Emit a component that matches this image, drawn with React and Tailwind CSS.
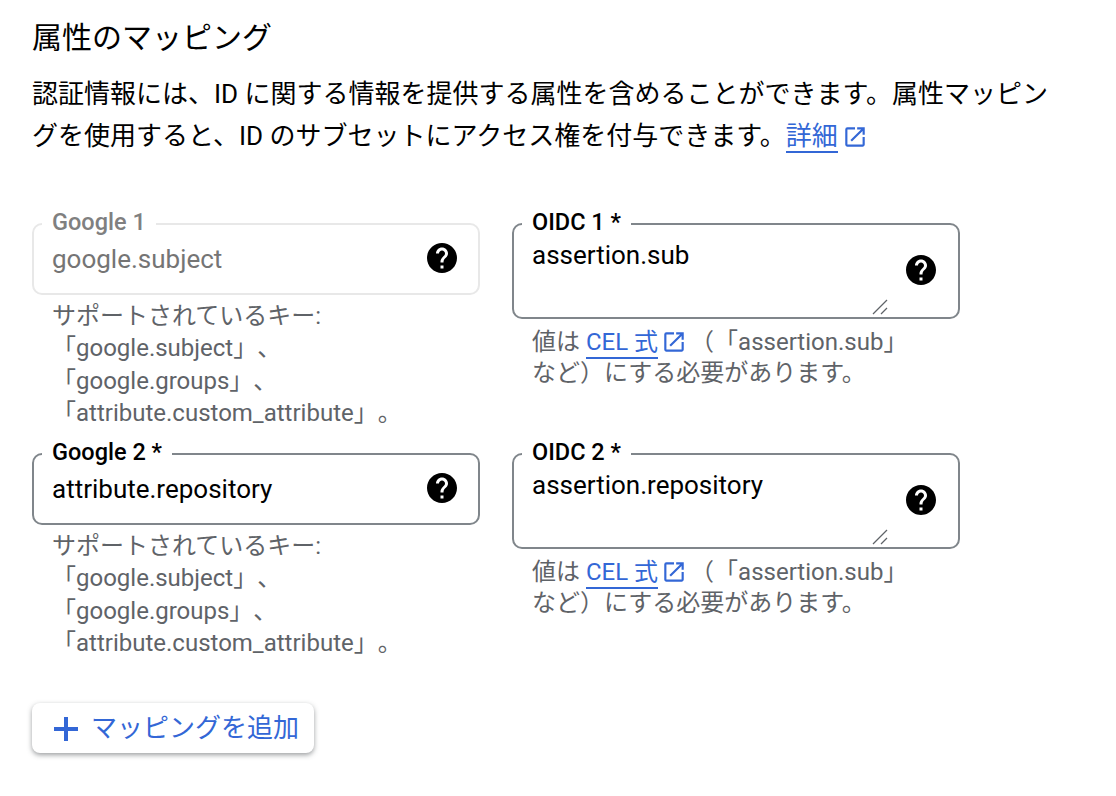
import React from 'react';

const helpPath = 'M12 2C6.48 2 2 6.48 2 12s4.48 10 10 10 10-4.48 10-10S17.52 2 12 2zm1 17h-2v-2h2v2zm2.07-7.75l-.9.92C13.45 12.9 13 13.5 13 15h-2v-.5c0-1.1.45-2.1 1.17-2.83l1.24-1.26c.37-.36.59-.86.59-1.41 0-1.1-.9-2-2-2s-2 .9-2 2H8c0-2.21 1.79-4 4-4s4 1.79 4 4c0 .88-.36 1.68-.93 2.25z';
const openPath = 'M19 19H5V5h7V3H5a2 2 0 00-2 2v14c0 1.1.9 2 2 2h14c1.1 0 2-.9 2-2v-7h-2v7zM14 3v2h3.59l-9.83 9.83 1.41 1.41L19 6.41V10h2V3h-7z';

const HelpIcon = () => (
    <svg viewBox="0 0 24 24" className="w-[36px] h-[36px] fill-black shrink-0">
        <path d={helpPath} />
    </svg>
);

const OpenIcon = ({ className }) => (
    <svg viewBox="0 0 24 24" className={`inline-block w-[26px] h-[26px] fill-[#3367d6] align-[-5px] ${className}`}>
        <path d={openPath} />
    </svg>
);

const AttributeHint = () => (
    <div className="pl-[20px] pt-[5px] text-[24px] leading-[32.4px] text-[#5f6368] h-[158px]">
        <div>サポートされているキー:</div>
        <div>「google.subject」、</div>
        <div>「google.groups」、</div>
        <div>「attribute.custom_attribute」。</div>
    </div>
);

const CelHint = () => (
    <div className="pl-[20px] pt-[8px] text-[24px] leading-[31px] text-[#5f6368] w-[420px] whitespace-nowrap">
        <div>値は <a className="text-[#3367d6] border-b-2 border-[#3367d6] pb-[1px]">CEL 式</a><OpenIcon className="ml-[3px] mr-[3px]" />（「assertion.sub」</div>
        <div>など）にする必要があります。</div>
    </div>
);

const GoogleField = ({ label, value, disabled }) => (
    <div>
        <div className={`relative h-[72px] rounded-[10px] border-2 flex items-center justify-between pl-[18px] pr-[18px] text-[26px] ${disabled ? 'border-[#e8e8e8] text-[#757575]' : 'border-[#80868b] text-black'}`}>
            <span className={`absolute left-[8px] top-[-17px] bg-white px-[10px] text-[23.5px] leading-[28px] font-medium ${disabled ? 'text-[#808080]' : 'text-black'}`}>{label}</span>
            <span>{value}</span>
            <span className="pb-[2px]"><HelpIcon /></span>
        </div>
        <AttributeHint />
    </div>
);

const OidcField = ({ label, value }) => (
    <div className="h-[230px]">
        <div className="relative h-[96px] rounded-[10px] border-2 border-[#80868b] pl-[18px] pt-[13px] text-[26px] leading-[34px] text-black">
            <span className="absolute left-[8px] top-[-17px] bg-white px-[10px] text-[23.5px] leading-[28px] font-medium">{label}</span>
            {value}
            <span className="absolute right-[19px] top-[27px]"><HelpIcon /></span>
            <svg viewBox="0 0 16 16" className="absolute right-[70px] bottom-[2px] w-[16px] h-[16px] stroke-[#5f6368]" fill="none" strokeWidth="1.3">
                <line x1="1" y1="15" x2="15" y2="1" />
                <line x1="9" y1="15" x2="15" y2="9" />
            </svg>
        </div>
        <CelHint />
    </div>
);

const App = () => {
    return (
        <div className="w-[1116px] h-[796px] bg-white overflow-hidden pl-[32px] pt-[16px] text-black [text-spacing-trim:space-all] font-['Roboto','Noto_Sans_CJK_JP',sans-serif]">
            <h1 className="text-[30px] leading-[44px] font-normal">属性のマッピング</h1>
            <p className="mt-[13px] w-[1030px] text-[26px] leading-[42px]">
                認証情報には、ID に関する情報を提供する属性を含めることができます。属性マッピングを使用すると、ID のサブセットにアクセス権を付与できます。<a className="text-[#3367d6] border-b-2 border-[#3367d6]">詳細</a> <OpenIcon className="ml-[-2px]" />
            </p>
            <div className="mt-[66px] grid grid-cols-[448px_448px] gap-x-[32px]">
                <GoogleField label="Google 1" value="google.subject" disabled />
                <OidcField label="OIDC 1 *" value="assertion.sub" />
                <GoogleField label="Google 2 *" value="attribute.repository" />
                <OidcField label="OIDC 2 *" value="assertion.repository" />
            </div>
            <button className="mt-[20px] h-[50px] w-[282px] rounded-[8px] bg-white flex items-center pl-[22px] gap-[13px] text-[26px] text-[#3367d6] shadow-[0_2px_5px_rgba(60,64,67,0.5)]">
                <svg viewBox="0 0 24 24" className="w-[24px] h-[24px] fill-[#3367d6] mt-[2px]">
                    <path d="M10 0h4v10h10v4H14v10h-4V14H0v-4h10z" />
                </svg>
                マッピングを追加
            </button>
        </div>
    );
};

export default App;
